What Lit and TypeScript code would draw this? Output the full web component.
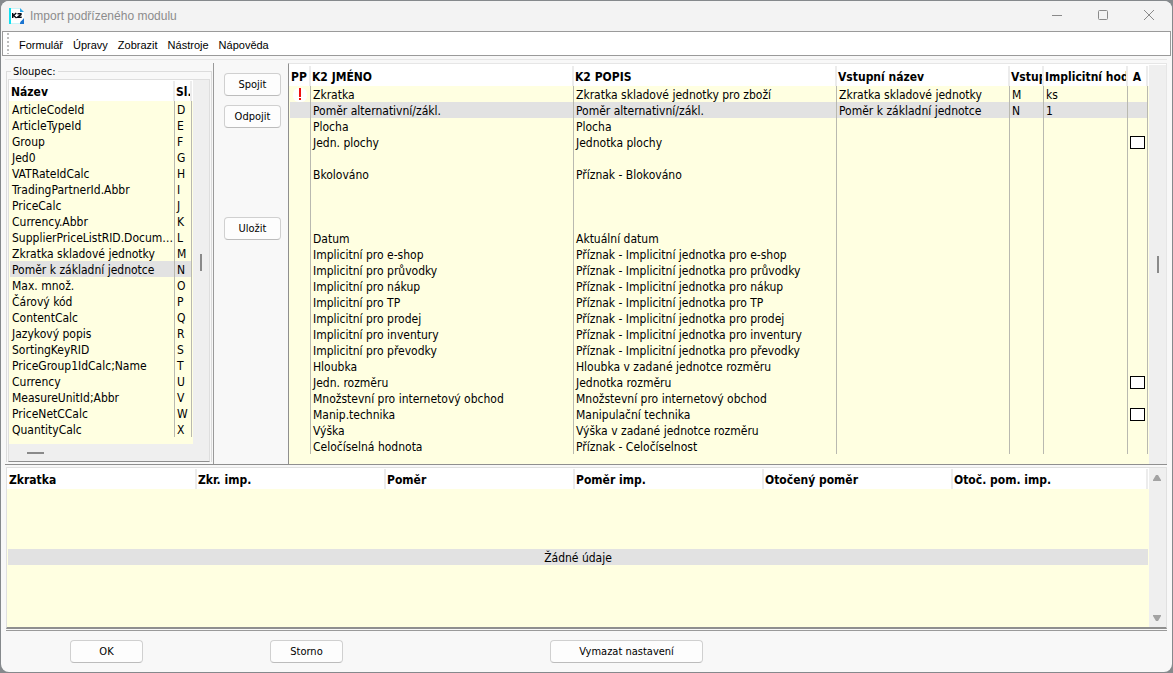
import { LitElement, html, css, nothing } from "lit";
import { customElement, property, state } from "lit/decorators.js";
import { classMap } from "lit/directives/class-map.js";

const SOURCE_COLUMNS: [string, string][] = [
  ["ArticleCodeId", "D"],
  ["ArticleTypeId", "E"],
  ["Group", "F"],
  ["Jed0", "G"],
  ["VATRateIdCalc", "H"],
  ["TradingPartnerId.Abbr", "I"],
  ["PriceCalc", "J"],
  ["Currency.Abbr", "K"],
  ["SupplierPriceListRID.DocumentId", "L"],
  ["Zkratka skladové jednotky", "M"],
  ["Poměr k základní jednotce", "N"],
  ["Max. množ.", "O"],
  ["Čárový kód", "P"],
  ["ContentCalc", "Q"],
  ["Jazykový popis", "R"],
  ["SortingKeyRID", "S"],
  ["PriceGroup1IdCalc;Name", "T"],
  ["Currency", "U"],
  ["MeasureUnitId;Abbr", "V"],
  ["PriceNetCCalc", "W"],
  ["QuantityCalc", "X"],
];

interface FieldRow {
  name?: string;
  desc?: string;
  input?: string;
  col?: string;
  value?: string;
  required?: boolean;
  option?: boolean;
}

const FIELDS: FieldRow[] = [
  { name: "Zkratka", desc: "Zkratka skladové jednotky pro zboží", input: "Zkratka skladové jednotky", col: "M", value: "ks", required: true },
  { name: "Poměr alternativní/zákl.", desc: "Poměr alternativní/zákl.", input: "Poměr k základní jednotce", col: "N", value: "1" },
  { name: "Plocha", desc: "Plocha" },
  { name: "Jedn. plochy", desc: "Jednotka plochy", option: true },
  {},
  { name: "Bkolováno", desc: "Příznak - Blokováno" },
  {},
  {},
  {},
  { name: "Datum", desc: "Aktuální datum" },
  { name: "Implicitní pro e-shop", desc: "Příznak - Implicitní jednotka pro e-shop" },
  { name: "Implicitní pro průvodky", desc: "Příznak - Implicitní jednotka pro průvodky" },
  { name: "Implicitní pro nákup", desc: "Příznak - Implicitní jednotka pro nákup" },
  { name: "Implicitní pro TP", desc: "Příznak - Implicitní jednotka pro TP" },
  { name: "Implicitní pro prodej", desc: "Příznak - Implicitní jednotka pro prodej" },
  { name: "Implicitní pro inventury", desc: "Příznak - Implicitní jednotka pro inventury" },
  { name: "Implicitní pro převodky", desc: "Příznak - Implicitní jednotka pro převodky" },
  { name: "Hloubka", desc: "Hloubka v zadané jednotce rozměru" },
  { name: "Jedn. rozměru", desc: "Jednotka rozměru", option: true },
  { name: "Množstevní pro internetový obchod", desc: "Množstevní pro internetový obchod" },
  { name: "Manip.technika", desc: "Manipulační technika", option: true },
  { name: "Výška", desc: "Výška v zadané jednotce rozměru" },
  { name: "Celočíselná hodnota", desc: "Příznak - Celočíselnost" },
];

const buttonStyles = css`
  .btn {
    box-sizing: border-box;
    height: 23px;
    padding: 1px 0 0;
    border: 1px solid #d0d0d0;
    border-bottom-color: #bcbcbc;
    border-radius: 4px;
    background: #fdfdfd;
    color: #000;
    font: 11px/16px "DejaVu Sans Condensed", "DejaVu Sans", sans-serif;
  }
`;

const gridStyles = css`
  table {
    width: 100%;
    border-collapse: separate;
    border-spacing: 0;
    table-layout: fixed;
  }
  th,
  td {
    box-sizing: border-box;
    padding: 2px 0 0 2px;
    overflow: hidden;
    white-space: nowrap;
    text-align: left;
    vertical-align: middle;
  }
  th {
    height: 20px;
    padding-left: 1px;
    border-right: 2px solid #ececec;
    background: #fff;
    font-weight: bold;
    line-height: 18px;
  }
  td {
    height: 16px;
    border-right: 1px solid #b9b9b0;
    line-height: 14px;
  }
  tr.selected td {
    background: #e2e2e2;
  }
`;

@customElement("title-bar")
class TitleBar extends LitElement {
  static styles = css`
    :host {
      display: flex;
      align-items: center;
      height: 30px;
      padding-left: 7px;
      background: #f3f3f3;
      color: #8c8c8c;
      font: 12px/16px "Liberation Sans", Arial, sans-serif;
    }
    .logo {
      display: block;
      margin-right: 5px;
    }
    .caption {
      flex: 1;
      margin: 0;
      font: inherit;
    }
    .control {
      display: flex;
      align-items: center;
      justify-content: center;
      width: 46px;
      height: 30px;
      padding: 0;
      border: 0;
      background: none;
    }
  `;

  render() {
    return html`
      <svg class="logo" width="17" height="18" viewBox="0 0 17 18" aria-hidden="true">
        <path d="M1 1h11l4 4v12H1z" fill="#fff" />
        <path d="M1 1h2v16H1z" fill="#12dff0" />
        <path d="M3 1h9v1H3zM3 16h9v1H3z" fill="#c9f4f8" />
        <path d="M12 1v4h4z" fill="#2aa6e8" />
        <path d="M16 11v6h-4c0-3 2-3 4-6z" fill="#1b74d0" />
        <path d="M4.700 6v5M8.300 6L5.500 8.500L8.500 11M9.500 6.700h3.500c1 1.500-2.500 2-3.500 3.600h4.200" fill="none" stroke="#0a0f18" stroke-width="1.400" />
      </svg>
      <h1 class="caption">Import podřízeného modulu</h1>
      <button class="control" aria-label="Minimalizovat">
        <svg width="12" height="12" viewBox="0 0 12 12"><path d="M1 5.500h10" stroke="#8a8a8a" /></svg>
      </button>
      <button class="control" aria-label="Maximalizovat">
        <svg width="12" height="12" viewBox="0 0 12 12"><rect x="1.500" y="0.500" width="9" height="9" rx="1" fill="none" stroke="#8a8a8a" /></svg>
      </button>
      <button class="control" aria-label="Zavřít">
        <svg width="12" height="12" viewBox="0 0 12 12"><path d="M1 0l10 10M11 0L1 10" stroke="#8a8a8a" /></svg>
      </button>
    `;
  }
}

@customElement("menu-bar")
class MenuBar extends LitElement {
  static styles = css`
    :host {
      display: flex;
      align-items: center;
      box-sizing: border-box;
      height: 25px;
      margin: 0 1px;
      padding-left: 4px;
      border: 1px solid #9a9a9a;
      background: #fff;
    }
    .grip {
      width: 2px;
      height: 21px;
      margin-right: 10px;
      background: repeating-linear-gradient(#bdbdbd 0 2px, #fff 2px 4px);
    }
    nav {
      display: flex;
      gap: 10px;
      padding-top: 2px;
    }
    .item {
      padding: 0;
      border: 0;
      background: none;
      color: #000;
      font: 11px/16px "Liberation Sans", Arial, sans-serif;
    }
  `;

  render() {
    const items = ["Formulář", "Úpravy", "Zobrazit", "Nástroje", "Nápověda"];
    return html`
      <div class="grip"></div>
      <nav>${items.map((label) => html`<button class="item">${label}</button>`)}</nav>
    `;
  }
}

@customElement("column-list")
class ColumnList extends LitElement {
  @state() private selected = 10;

  static styles = [
    gridStyles,
    css`
      :host {
        display: block;
        padding: 0 1px 2px 1px;
      }
      fieldset {
        display: block;
        min-width: 0;
        margin: 0;
        padding: 0 1px 0 1px;
        border: 1px solid #dcdcdc;
        border-bottom: 0;
      }
      legend {
        margin-left: 3px;
        padding: 2px 2px 0;
        font-size: 11px;
        line-height: 14px;
      }
      .box {
        display: grid;
        grid-template-columns: minmax(0, 1fr) 16px;
        grid-template-rows: auto 17px;
        border: 1px solid #dedede;
        border-bottom-color: #8f8f8f;
      }
      .list {
        padding: 1px 1px 7px 1px;
        background: linear-gradient(#fff 21px, #ffffe1 21px);
      }
      .vbar {
        display: flex;
        align-items: center;
        justify-content: center;
        background: #efefef;
      }
      .hbar {
        grid-column: 1 / 3;
        display: flex;
        align-items: center;
        padding-left: 18px;
        background: #efefef;
      }
      .vthumb {
        width: 2px;
        height: 17px;
        background: #8a8a8a;
      }
      .hthumb {
        width: 17px;
        height: 2px;
        background: #8a8a8a;
      }
      .code {
        width: 17px;
      }
      .name {
        text-overflow: ellipsis;
      }
      tr {
        cursor: default;
      }
    `,
  ];

  render() {
    return html`
      <fieldset>
        <legend>Sloupec:</legend>
        <div class="box">
          <div class="list">
            <table>
              <colgroup><col /><col class="code" /></colgroup>
              <thead>
                <tr><th>Název</th><th>Sl.</th></tr>
              </thead>
              <tbody>
                ${SOURCE_COLUMNS.map(
                  ([name, code], i) => html`
                    <tr class=${classMap({ selected: i === this.selected })} @click=${() => (this.selected = i)}>
                      <td class="name">${name}</td>
                      <td>${code}</td>
                    </tr>
                  `
                )}
              </tbody>
            </table>
          </div>
          <div class="vbar"><div class="vthumb"></div></div>
          <div class="hbar"><div class="hthumb"></div></div>
        </div>
      </fieldset>
    `;
  }
}

@customElement("field-grid")
class FieldGrid extends LitElement {
  @state() private selected = 1;

  static styles = [
    gridStyles,
    css`
      :host {
        display: grid;
        grid-template-columns: minmax(0, 1fr) 17px;
        padding-top: 1px;
        border: 1px solid #e6e6e6;
        border-left-color: #8f8f8f;
        border-bottom: 0;
        background: #fff;
      }
      .body {
        padding: 1px 1px 8px 1px;
        background: linear-gradient(#fff 21px, #ffffe1 21px);
      }
      .vbar {
        display: flex;
        align-items: center;
        justify-content: center;
        background: #efefef;
      }
      .vthumb {
        width: 2px;
        height: 17px;
        background: #8a8a8a;
      }
      .pp {
        width: 21px;
      }
      .input {
        width: 173px;
      }
      .code {
        width: 34px;
      }
      .value {
        width: 84px;
      }
      .flag {
        width: 20px;
      }
      .center {
        padding-left: 0;
        text-align: center;
      }
      .mark {
        display: block;
        margin: 0 auto;
        border-radius: 6px;
        background: #fff;
      }
      input {
        appearance: none;
        display: block;
        box-sizing: border-box;
        width: 15px;
        height: 13px;
        margin: 0 auto 1px;
        border: 1px solid #000;
        background: #fff;
      }
      input:checked {
        background: #000;
      }
      tr {
        cursor: default;
      }
    `,
  ];

  private row(f: FieldRow, i: number) {
    return html`
      <tr class=${classMap({ selected: i === this.selected })} @click=${() => (this.selected = i)}>
        <td class="center">
          ${f.required
            ? html`<svg class="mark" width="14" height="14" viewBox="0 0 14 14" role="img" aria-label="Povinné">
                <path d="M6 0h2v9H6zM6 10h2v2H6z" fill="#f01010" />
              </svg>`
            : nothing}
        </td>
        <td>${f.name ?? nothing}</td>
        <td>${f.desc ?? nothing}</td>
        <td>${f.input ?? nothing}</td>
        <td>${f.col ?? nothing}</td>
        <td>${f.value ?? nothing}</td>
        <td class="center">
          ${f.option ? html`<input type="checkbox" aria-label=${"A: " + f.name} />` : nothing}
        </td>
      </tr>
    `;
  }

  render() {
    return html`
      <div class="body">
        <table>
          <colgroup>
            <col class="pp" /><col /><col /><col class="input" /><col class="code" /><col class="value" /><col class="flag" />
          </colgroup>
          <thead>
            <tr>
              <th>PP</th>
              <th>K2 JMÉNO</th>
              <th>K2 POPIS</th>
              <th>Vstupní název</th>
              <th>Vstup</th>
              <th>Implicitní hod</th>
              <th class="center">A</th>
            </tr>
          </thead>
          <tbody>
            ${FIELDS.map((f, i) => this.row(f, i))}
          </tbody>
        </table>
      </div>
      <div class="vbar"><div class="vthumb"></div></div>
    `;
  }
}

@customElement("unit-grid")
class UnitGrid extends LitElement {
  @property({ attribute: false }) headings = ["Zkratka", "Zkr. imp.", "Poměr", "Poměr imp.", "Otočený poměr", "Otoč. pom. imp."];

  static styles = [
    gridStyles,
    css`
      :host {
        display: grid;
        grid-template-columns: minmax(0, 1fr) 17px;
        border: 1px solid #e0e0e0;
        border-bottom: 2px solid #8f8f8f;
        background: #fff;
      }
      .body {
        display: flex;
        flex-direction: column;
        padding: 1px 1px 0 1px;
        background: linear-gradient(#fff 21px, #ffffe1 21px);
      }
      .last {
        width: 195px;
      }
      .area {
        flex: 1;
        display: flex;
        flex-direction: column;
        justify-content: center;
        padding-bottom: 2px;
      }
      .empty {
        margin: 0;
        padding-top: 2px;
        background: #e2e2e2;
        line-height: 14px;
        text-align: center;
      }
      .vbar {
        display: flex;
        flex-direction: column;
        align-items: center;
        justify-content: space-between;
        box-sizing: border-box;
        padding: 7px 1px 6px 0;
        background: #efefef;
      }
      svg {
        display: block;
      }
    `,
  ];

  render() {
    return html`
      <div class="body">
        <table>
          <colgroup><col span="5" /><col class="last" /></colgroup>
          <thead>
            <tr>${this.headings.map((h) => html`<th>${h}</th>`)}</tr>
          </thead>
        </table>
        <div class="area"><p class="empty">Žádné údaje</p></div>
      </div>
      <div class="vbar">
        <svg width="8" height="6" viewBox="0 0 8 6"><path d="M3 0h2l3 5v1H0V5z" fill="#a3a3a3" /></svg>
        <svg width="8" height="6" viewBox="0 0 8 6"><path d="M0 0h8v1L5 6H3L0 1z" fill="#a3a3a3" /></svg>
      </div>
    `;
  }
}

@customElement("app-root")
class AppRoot extends LitElement {
  static styles = [
    buttonStyles,
    css`
      :host {
        display: flex;
        box-sizing: border-box;
        min-height: 100vh;
        padding: 1px;
        background: #85898c;
        color: #000;
        font: 12px/16px "DejaVu Sans Condensed", "DejaVu Sans", sans-serif;
      }
      .window {
        flex: 1;
        display: flex;
        flex-direction: column;
        min-width: 0;
        overflow: hidden;
        border-radius: 8px;
        background: #f8f8f8;
      }
      .upper {
        display: grid;
        grid-template-columns: 208px 75px minmax(0, 1fr);
        margin: 3px 5px 0 4px;
        padding-top: 3px;
        border-top: 1px solid #e6e6e6;
        border-bottom: 1px solid #8f8f8f;
      }
      .actions {
        display: flex;
        flex-direction: column;
        gap: 9px;
        padding: 10px 7px 0 10px;
        border-left: 1px solid #9a9a9a;
      }
      .save {
        margin-top: 80px;
      }
      .lower {
        flex: 1;
        display: grid;
        margin: 2px 5px 1px 5px;
      }
      .footer {
        display: grid;
        grid-template-columns: 73px 73px 233px;
        column-gap: 127px;
        justify-content: start;
        margin: 0 5px;
        padding: 9px 0 9px 64px;
        border-top: 1px solid #9a9a9a;
      }
      .clear {
        margin-left: 80px;
      }
    `,
  ];

  render() {
    return html`
      <main class="window">
        <title-bar></title-bar>
        <menu-bar></menu-bar>
        <section class="upper">
          <column-list></column-list>
          <div class="actions">
            <button class="btn">Spojit</button>
            <button class="btn">Odpojit</button>
            <button class="btn save">Uložit</button>
          </div>
          <field-grid></field-grid>
        </section>
        <section class="lower"><unit-grid></unit-grid></section>
        <footer class="footer">
          <button class="btn">OK</button>
          <button class="btn">Storno</button>
          <button class="btn clear">Vymazat nastavení</button>
        </footer>
      </main>
    `;
  }
}
